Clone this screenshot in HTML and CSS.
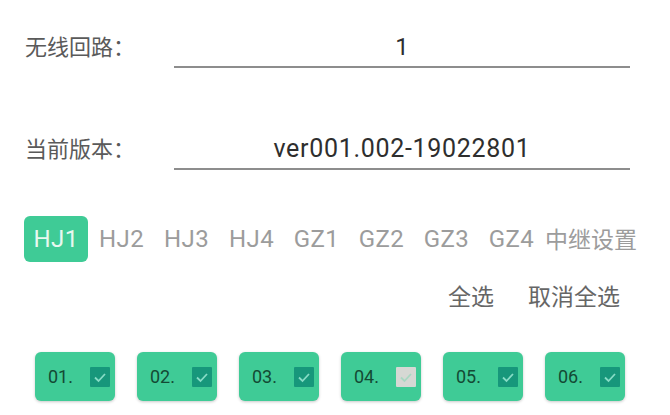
FILE: index.html
```html
<!DOCTYPE html>
<html lang="zh">
<head>
<meta charset="utf-8">
<link rel="stylesheet" href="styles.css">
</head>
<body>
<div class="page">
  <div class="row row-first">
    <div class="label">无线回路：</div>
    <div class="field">1</div>
  </div>
  <div class="row row-second">
    <div class="label">当前版本：</div>
    <div class="field version">ver001.002-19022801</div>
  </div>
  <div class="tabs">
    <div class="tab active">HJ1</div>
    <div class="tab">HJ2</div>
    <div class="tab">HJ3</div>
    <div class="tab">HJ4</div>
    <div class="tab">GZ1</div>
    <div class="tab">GZ2</div>
    <div class="tab">GZ3</div>
    <div class="tab">GZ4</div>
    <div class="tab tab-wide">中继设置</div>
  </div>
  <div class="actions">
    <span class="action">全选</span>
    <span class="action">取消全选</span>
  </div>
  <div class="cards">
    <div class="card"><span class="num">01.</span><span class="check"><svg viewBox="0 0 20 20"><path d="M5 10.5 L8.5 14 L15 7"/></svg></span></div>
    <div class="card"><span class="num">02.</span><span class="check"><svg viewBox="0 0 20 20"><path d="M5 10.5 L8.5 14 L15 7"/></svg></span></div>
    <div class="card"><span class="num">03.</span><span class="check"><svg viewBox="0 0 20 20"><path d="M5 10.5 L8.5 14 L15 7"/></svg></span></div>
    <div class="card"><span class="num">04.</span><span class="check off"><svg viewBox="0 0 20 20"><path d="M5 10.5 L8.5 14 L15 7"/></svg></span></div>
    <div class="card"><span class="num">05.</span><span class="check"><svg viewBox="0 0 20 20"><path d="M5 10.5 L8.5 14 L15 7"/></svg></span></div>
    <div class="card"><span class="num">06.</span><span class="check"><svg viewBox="0 0 20 20"><path d="M5 10.5 L8.5 14 L15 7"/></svg></span></div>
  </div>
</div>
</body>
</html>
```
FILE: styles.css
```css
html, body {
  margin: 0;
  padding: 0;
  background: #ffffff;
}
.page {
  width: 670px;
  height: 415px;
  overflow: hidden;
  font-family: Roboto, "Noto Sans CJK SC", sans-serif;
}
.row {
  display: flex;
  align-items: flex-start;
  padding-left: 25px;
}
.row-first {
  margin-top: 28px;
}
.row-second {
  margin-top: 62px;
}
.label {
  width: 149px;
  font-size: 22px;
  line-height: 34px;
  height: 34px;
  color: #5a5a5a;
  font-family: "Noto Sans CJK SC", sans-serif;
}
.field {
  width: 456px;
  height: 38px;
  line-height: 38px;
  font-size: 24px;
  color: #2e2e2e;
  text-align: center;
  border-bottom: 2px solid #8d8d8d;
}
.field.version {
  font-size: 25px;
  letter-spacing: 0.7px;
}
.tabs {
  display: flex;
  margin-top: 46px;
  padding-left: 24px;
}
.tab {
  width: 65px;
  height: 46px;
  line-height: 46px;
  text-align: center;
  font-size: 24px;
  letter-spacing: 0.4px;
  color: #9c9c9c;
  border-radius: 6px;
}
.tab.active {
  width: 64px;
  margin-right: 1px;
  background: #3fcb96;
  color: #e8f8f0;
}
.tab-wide {
  width: auto;
  padding-left: 1px;
  letter-spacing: 0;
  font-family: "Noto Sans CJK SC", sans-serif;
  font-size: 23px;
  line-height: 44px;
}
.actions {
  display: flex;
  justify-content: flex-end;
  gap: 34px;
  padding-right: 50px;
  margin-top: 21px;
  height: 24px;
  line-height: 24px;
}
.action {
  font-family: "Noto Sans CJK SC", sans-serif;
  font-size: 23px;
  color: #666666;
}
.cards {
  display: flex;
  gap: 22px;
  padding-left: 35px;
  margin-top: 45px;
}
.card {
  width: 80px;
  height: 49px;
  box-sizing: border-box;
  padding: 0 5px 0 13px;
  display: flex;
  align-items: center;
  justify-content: space-between;
  background: #3fcb96;
  border-radius: 6px;
  box-shadow: 0 1px 3px rgba(0, 0, 0, 0.22);
}
.num {
  font-size: 18px;
  color: #134a34;
}
.check {
  width: 20px;
  height: 20px;
  background: #17977b;
  border-radius: 1px;
  display: flex;
}
.check svg {
  width: 20px;
  height: 20px;
}
.check path {
  fill: none;
  stroke: #86dcc6;
  stroke-width: 1.8;
}
.check.off {
  background: #d6d8d4;
}
.check.off path {
  stroke: #a9d7c2;
}
```
